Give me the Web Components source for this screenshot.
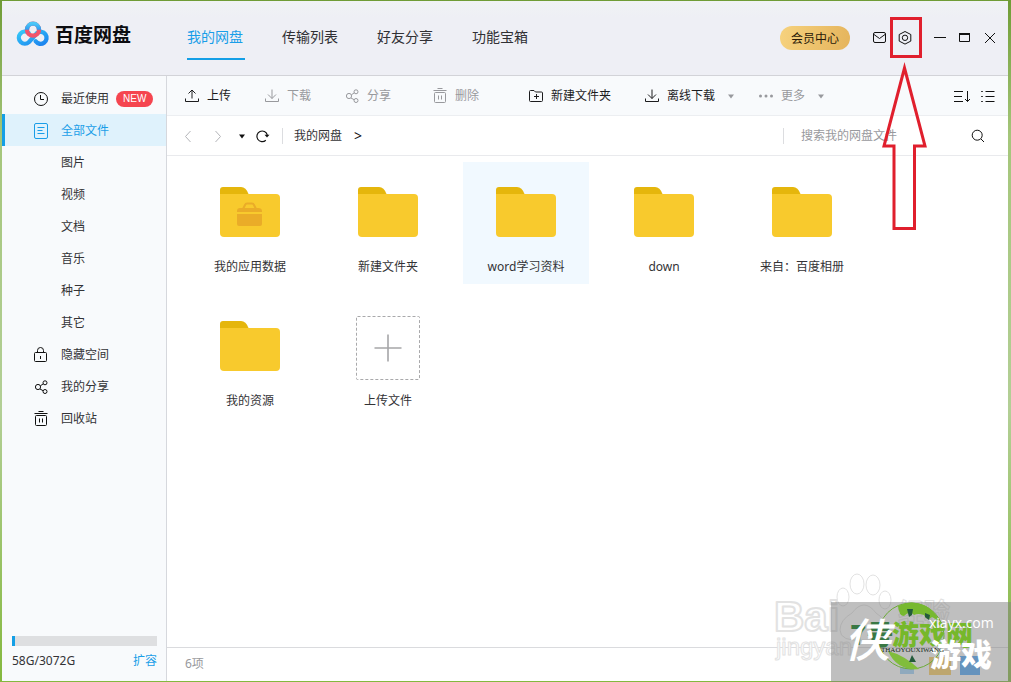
<!DOCTYPE html>
<html lang="zh-CN">
<head>
<meta charset="utf-8">
<meta name="viewport" content="width=device-width, initial-scale=1">
<title>百度网盘</title>
<style>
  body { margin: 0; font: 12px/18px "Noto Sans", "Noto Sans CJK SC", sans-serif; color: #333336; }
</style>
</head>
<body>
<disk-app></disk-app>
<script>
const ICONS = {
  clock: '<circle cx="7" cy="7" r="6.5"/><path d="M6.5 3v4.5H10"/>',
  file: '<rect x=".5" y="-.5" width="13" height="15" rx="1.5"/><path d="M3.5 3.5h7M3.5 6.5h5M3.5 9.5h7"/>',
  lock: '<rect x=".5" y="4.500" width="12" height="9" rx="1"/><path d="M3.500 4.500V2.500a3 3 0 0 1 6 0v2M6.500 8v3"/>',
  share: '<circle cx="4" cy="7" r="2.600"/><circle cx="11" cy="2.800" r="2"/><circle cx="11" cy="11.500" r="2"/><path d="M6.500 5.700l2.700-1.800M6 9l3.300 1.800"/>',
  trash: '<path d="M.5 1.500h13M4.500 -.5h5"/><rect x="1.500" y="3.500" width="11" height="10" rx="1"/><path d="M5.500 6.500v4M8.500 6.500v4"/>',
  upload: '<path d="M.5 9.500v3h13v-3M7 9.500V1M3.500 4.500L7 1l3.500 3.500"/>',
  download: '<path d="M.5 9.500v3h13v-3M7 .5v9M3 5.500l4 4 4-4"/>',
  newfolder: '<path d="M.5 11.500v-9a1 1 0 0 1 1-1h3.500l1.500 1.500h6a1 1 0 0 1 1 1v7.500a1 1 0 0 1-1 1h-11a1 1 0 0 1-1-1zM7.500 5v5M5 7.500h5"/>',
  dots: '<g fill="currentColor" stroke="none"><circle cx="1.500" cy="7" r="1.500"/><circle cx="7" cy="7" r="1.500"/><circle cx="12.500" cy="7" r="1.500"/></g>',
  mail: '<rect x=".5" y="1.500" width="12" height="10" rx="1.500"/><path d="M1 3.500l5.500 4 5.500-4"/>',
  gear: '<path d="M7 .5l5.800 3v6.600L7 13.100l-5.800-3V3.500z"/><circle cx="7" cy="6.800" r="2.700"/>',
  minus: '<path d="M1 6.500h12"/>',
  max: '<path d="M1.500 2.500h10v8h-10z"/><path d="M1 3h11" stroke-width="2"/>',
  close: '<path d="M2 2l10 10M12 2l-10 10"/>',
  sort: '<path d="M-1 2.500h9M-1 7.500h8M-1 12.500h9M12.500 2v10.500M10 10l2.500 2.500L15 10"/>',
  list: '<path d="M.2 2.500h1.600M.2 7.500h1.600M.2 12.500h1.600M4.500 2.500h9M4.500 7.500h9M4.500 12.500h9"/>',
  back: '<path d="M9.500 2l-5 5.500 5 5.500"/>',
  forward: '<path d="M4.500 2l5 5.500-5 5.500"/>',
  reload: '<path d="M9.800 11.200A5.300 5.300 0 1 1 11.300 6" stroke-width="1.200"/><path d="M8.500 5.800h5L11 8.600z" fill="currentColor" stroke="none"/>',
  search: '<circle cx="6.200" cy="6.200" r="5"/><path d="M10 10l3 3"/>',
  caret: '<path d="M4 5.500h6L7 9.500z" fill="currentColor" stroke="none"/>'
};

function define(name, html, ready) {
  const tpl = document.createElement('template');
  tpl.innerHTML = html;
  customElements.define(name, class extends HTMLElement {
    constructor() {
      super();
      this.attachShadow({ mode: 'open' }).append(tpl.content.cloneNode(true));
    }
    connectedCallback() { if (ready) ready(this, this.shadowRoot); }
  });
}

define('disk-icon', `
  <style>
    :host { display: block; width: 14px; height: 14px; flex: none; }
    svg { display: block; width: 100%; height: 100%; overflow: visible; fill: none; stroke: currentColor; }
  </style>
  <svg viewBox="0 0 14 14" aria-hidden="true"></svg>`,
  (el, root) => { root.querySelector('svg').innerHTML = ICONS[el.getAttribute('name')]; });

define('icon-button', `
  <style>
    :host { display: block; flex: none; color: #111; }
    button { display: flex; align-items: center; justify-content: center; width: 100%; height: 24px;
      margin: 0; padding: 0; border: 0; background: none; color: inherit; cursor: pointer; }
  </style>
  <button type="button"><span></span></button>`,
  (el, root) => {
    root.querySelector('span').innerHTML = '<disk-icon name="' + el.getAttribute('icon') + '"></disk-icon>';
    root.querySelector('button').setAttribute('aria-label', el.getAttribute('label'));
  });

define('disk-logo', `
  <style>
    :host { display: flex; align-items: center; gap: 6px; }
    svg { width: 32px; height: 26px; overflow: visible; }
    span { font: 700 19px/26px "Noto Sans CJK SC", sans-serif; color: #0c0c10; }
  </style>
  <svg viewBox="0 0 96 78" fill="none" stroke-width="13" aria-hidden="true">
    <defs>
      <linearGradient id="l" x1="0" y1="0" x2="1" y2="1"><stop offset="0" stop-color="#35c8f8"/><stop offset="1" stop-color="#1b82ee"/></linearGradient>
      <linearGradient id="t" x1="0" y1="0" x2="0" y2="1"><stop offset="0" stop-color="#4cc6f7"/><stop offset="1" stop-color="#2b9cf2"/></linearGradient>
    </defs>
    <path d="M56 61a18 18 0 1 0 4-25L36 63a18 18 0 1 1-1-27" stroke="url(#l)" stroke-linecap="round"/>
    <circle cx="48" cy="26" r="18" stroke="#f2536c"/>
    <path d="M30 26a18 18 0 0 1 36 0" stroke="url(#t)"/>
  </svg>
  <span>百度网盘</span>`);

define('disk-header', `
  <style>
    :host { display: flex; align-items: flex-start; box-sizing: border-box; height: 75px; padding: 0 6px 0 15px;
      background: linear-gradient(#f0f3f4, #eeeff5 16px); border-bottom: 1px solid #d2d3d8; }
    disk-logo { width: 170px; margin-top: 20px; }
    nav { display: flex; gap: 37px; }
    nav a { width: 58px; padding: 25px 0 11px; border-bottom: 2px solid transparent; font-size: 14px; line-height: 21px;
      white-space: nowrap; color: #303034; text-decoration: none; }
    nav a[aria-current] { color: #1a9ee8; border-color: #149fe6; }
    .tools { display: flex; align-items: center; margin: 25px 0 0 auto; }
    .vip { height: 24px; margin: 0 17px 0 0; padding: 1px 11px 0; border: 0; border-radius: 12px; font: inherit;
      color: #2a1a08; background: linear-gradient(100deg, #f6d27e, #e5b45c); }
    icon-button { width: 25px; }
    .rule { width: 1px; height: 14px; margin: 0 5px 0 4px; background: #dcdde3; }
  </style>
  <disk-logo></disk-logo>
  <nav>
    <a href="#disk" aria-current="page">我的网盘</a>
    <a href="#transfer">传输列表</a>
    <a href="#friends">好友分享</a>
    <a href="#tools">功能宝箱</a>
  </nav>
  <div class="tools">
    <button class="vip" type="button">会员中心</button>
    <icon-button icon="mail" label="消息"></icon-button>
    <icon-button icon="gear" label="设置"></icon-button>
    <span class="rule"></span>
    <icon-button icon="minus" label="最小化"></icon-button>
    <icon-button icon="max" label="最大化"></icon-button>
    <icon-button icon="close" label="关闭"></icon-button>
  </div>`);

define('side-item', `
  <style>
    :host { display: block; }
    a { display: flex; align-items: center; box-sizing: border-box; height: 32px; padding: 1px 0 0 29px;
      border-left: 3px solid transparent; color: inherit; text-decoration: none; }
    .slot { width: 14px; margin-right: 13px; color: #111; }
    :host([active]) a, :host([active]) .slot { color: #1a9ee8; }
    :host([active]) a { background: #dff2fc; border-color: #149fe6; }
    ::slotted(b) { margin-left: 7px; padding: 0 7px; border-radius: 8px; background: #f5454f; color: #fff;
      font: 400 10px/16px "Liberation Sans", sans-serif; }
  </style>
  <a href="#list"><span class="slot"></span><slot></slot></a>`,
  (el, root) => {
    const n = el.getAttribute('icon');
    if (n) root.querySelector('.slot').innerHTML = '<disk-icon name="' + n + '"></disk-icon>';
  });

define('disk-sidebar', `
  <style>
    :host { display: flex; flex-direction: column; box-sizing: border-box; width: 165px; flex: none;
      padding-top: 6px; background: #f8fafc; border-right: 1px solid #d6d8dd; }
    .quota { display: flex; flex-wrap: wrap; justify-content: space-between; margin: auto 9px 11px 10px; }
    progress { appearance: none; display: block; width: 100%; height: 10px; margin-bottom: 6px; border: 0; }
    progress::-webkit-progress-bar { background: #dedfe1; }
    progress::-webkit-progress-value { background: #149fe6; }
    .quota a { color: #1a9ee8; text-decoration: none; }
  </style>
  <side-item icon="clock">最近使用<b>NEW</b></side-item>
  <side-item icon="file" active>全部文件</side-item>
  <side-item>图片</side-item>
  <side-item>视频</side-item>
  <side-item>文档</side-item>
  <side-item>音乐</side-item>
  <side-item>种子</side-item>
  <side-item>其它</side-item>
  <side-item icon="lock">隐藏空间</side-item>
  <side-item icon="share">我的分享</side-item>
  <side-item icon="trash">回收站</side-item>
  <div class="quota">
    <progress id="q" max="3072" value="58"></progress>
    <label for="q">58G/3072G</label>
    <a href="#expand">扩容</a>
  </div>`);

define('tool-button', `
  <style>
    :host { display: block; flex: none; color: #1c1c1e; }
    :host([muted]) { color: #98999d; }
    button { display: flex; align-items: center; gap: 8px; margin: 0; padding: 0; border: 0; background: none;
      font: inherit; color: inherit; white-space: nowrap; }
    .caret { width: 14px; margin: 0 -3px 0 1px; color: #98999d; }
    :host(:not([menu])) .caret { display: none; }
  </style>
  <button type="button"><span class="lead"></span><slot></slot><disk-icon class="caret" name="caret"></disk-icon></button>`,
  (el, root) => {
    root.querySelector('.lead').innerHTML = '<disk-icon name="' + el.getAttribute('icon') + '"></disk-icon>';
  });

define('disk-toolbar', `
  <style>
    :host { display: flex; align-items: center; box-sizing: border-box; height: 40px; padding: 0 13px 0 18px;
      background: #f8fafc; border-bottom: 1px solid #eceef1; }
    .group { display: flex; gap: 34px; }
    .group + .group { margin-left: 50px; }
    .group .wide { margin-left: 8px; }
    .group.more { margin-left: 24px; }
    .views { display: flex; gap: 12px; margin-left: auto; }
    icon-button { width: 14px; }
  </style>
  <div class="group">
    <tool-button icon="upload">上传</tool-button>
    <tool-button icon="download" muted>下载</tool-button>
    <tool-button icon="share" muted>分享</tool-button>
    <tool-button class="wide" icon="trash" muted>删除</tool-button>
  </div>
  <div class="group">
    <tool-button icon="newfolder">新建文件夹</tool-button>
    <tool-button icon="download" menu>离线下载</tool-button>
  </div>
  <div class="group more">
    <tool-button icon="dots" muted menu>更多</tool-button>
  </div>
  <div class="views">
    <icon-button icon="sort" label="排序"></icon-button>
    <icon-button icon="list" label="列表视图"></icon-button>
  </div>`);

define('disk-address', `
  <style>
    :host { display: flex; align-items: center; box-sizing: border-box; height: 40px; padding: 0 23px 0 11px;
      background: #fff; border-bottom: 1px solid #e9eaed; }
    .nav { display: flex; align-items: center; gap: 10px; }
    .nav icon-button { width: 20px; }
    .nav .dim { color: #b4b5b9; }
    .nav .small { width: 8px; }
    .nav .mid { width: 14px; }
    .rule { width: 1px; height: 16px; margin: 0 11px 0 12px; background: #dcdde0; }
    .path { display: flex; gap: 12px; }
    .path a { color: inherit; text-decoration: none; }
    .path span { font-size: 14px; color: #111; }
    form { display: flex; align-items: center; margin-left: auto; width: 202px; }
    .rule.edge { margin: 0 17px 0 0; }
    input { flex: 1; min-width: 0; height: 24px; padding: 0; border: 0; outline: 0; background: none; font: inherit; color: inherit; }
    input::placeholder { color: #98999d; }
    form icon-button { width: 14px; }
  </style>
  <div class="nav">
    <icon-button class="dim" icon="back" label="后退"></icon-button>
    <icon-button class="dim" icon="forward" label="前进"></icon-button>
    <icon-button class="small" icon="caret" label="历史"></icon-button>
    <icon-button class="mid" icon="reload" label="刷新"></icon-button>
  </div>
  <span class="rule"></span>
  <div class="path"><a href="#root">我的网盘</a><span>&gt;</span></div>
  <form>
    <span class="rule edge"></span>
    <input type="search" aria-label="搜索" placeholder="搜索我的网盘文件">
    <icon-button icon="search" label="搜索"></icon-button>
  </form>`);

define('file-tile', `
  <style>
    :host { display: flex; flex-direction: column; align-items: center; box-sizing: border-box; height: 122px;
      padding-top: 20px; text-align: center; }
    :host([selected]) { background: #f1f9ff; }
    svg { width: 64px; height: 64px; margin-bottom: 12px; }
    .app, .add { display: none; }
    :host([kind=app]) .app, :host([kind=add]) .add { display: inline; }
    :host([kind=add]) .folder { display: none; }
  </style>
  <svg viewBox="0 0 64 64" aria-hidden="true">
    <g class="folder">
      <path d="M2 20V8a3 3 0 0 1 3-3h18q5 0 7.500 7v8z" fill="#e5b60c"/>
      <path d="M2 12h56a4 4 0 0 1 4 4v35a4 4 0 0 1-4 4H6a4 4 0 0 1-4-4z" fill="#f8ca2d"/>
    </g>
    <g class="app" fill="#eaac28">
      <path d="M19 30v-1q0-3 3-3h18q4 0 4 3v1zM19 32h25v10q0 2-2 2H21q-2 0-2-2z"/>
      <path d="M25 27l2-4q.5-1.500 2-1.500h5q1.500 0 2 1.500l2 4" fill="none" stroke="#eaac28" stroke-width="2"/>
    </g>
    <g class="add" fill="none">
      <rect x=".5" y=".5" width="63" height="63" rx="1" stroke="#a9a9ab" stroke-dasharray="3 2"/>
      <path d="M18.500 32h27M32 18.500v27" stroke="#a6a6a8" stroke-width="1.600"/>
    </g>
  </svg>
  <slot></slot>`);

define('disk-files', `
  <style>
    :host { display: grid; grid-template-columns: repeat(auto-fill, 126px); gap: 12px; align-content: start;
      flex: 1; padding: 6px 20px; background: #fff; }
  </style>
  <file-tile kind="app">我的应用数据</file-tile>
  <file-tile>新建文件夹</file-tile>
  <file-tile selected>word学习资料</file-tile>
  <file-tile>down</file-tile>
  <file-tile>来自：百度相册</file-tile>
  <file-tile>我的资源</file-tile>
  <file-tile kind="add">上传文件</file-tile>`);

define('disk-marks', `
  <style>
    :host { position: absolute; inset: 0; pointer-events: none; }
    svg { position: absolute; right: 0; }
    .arrow { top: 0; }
    .stamp { bottom: 0; }
    text { font-family: "Noto Sans CJK SC", sans-serif; }
  </style>
  <svg class="arrow" width="131" height="240" viewBox="880 0 131 240" fill="none" stroke="#e01f2d" stroke-width="3" aria-hidden="true">
    <path d="M891.500 18.500h29v38h-29z"/>
    <path d="M904.500 68l20.500 78h-10.500v82.500h-20.500V146H884z"/>
  </svg>
  <svg class="stamp" width="241" height="122" viewBox="770 560 241 122">
    <g fill="#fff" stroke="#e2e2e2" stroke-width="2" stroke-linejoin="round">
      <text x="774" y="631" font-size="42" font-weight="700" style="font-family:'Liberation Sans',sans-serif">Bai</text>
      <text x="776" y="655" font-size="24" stroke-width="1" style="font-family:'Liberation Sans',sans-serif">jingyan</text>
      <path d="M840 630q0-10 12-17 6-8 12-8t12 8q12 8 12 17 0 12-24 10-24 2-24-10z" stroke-width="1"/>
      <g stroke-width="1">
        <ellipse cx="857" cy="584" rx="7" ry="10"/><ellipse cx="873" cy="585" rx="7" ry="10"/>
        <ellipse cx="843" cy="597" rx="6" ry="9"/><ellipse cx="885" cy="600" rx="6" ry="9"/>
        <text x="898" y="622" font-size="26" font-weight="700">经验</text>
      </g>
    </g>
    <path d="M831 602h180v80H831z" fill="#808080" fill-opacity=".5"/>
    <path d="M900 667h14v7h-14z" fill="#8fa9bd"/>
    <path d="M929 657h22v18h-22z" fill="#bda66f"/>
    <path d="M960 656h20v19h-20z" fill="#6593bd"/>
    <circle cx="911" cy="636" r="33" fill="none" stroke="#6dac38"/>
    <path d="M898 606q14-7 28 0 11 7 13 15l-7-4q-5 5-8-2-6-2-10 0-4-5-10 1-5 0-6-10z" fill="#77b92f"/>
    <path d="M907 609h6l-1 6-3 2zM925 613l5 2-1 5-4-3z" fill="#245b3c"/>
    <path d="M888 651q16 4 31 18-22 2-31-18z" fill="#80bd3c"/>
    <path d="M909 662l3-7 4 7z" fill="#245b3c"/>
    <g font-weight="900">
      <text x="850" y="645" font-size="27" fill="#397844">7号</text>
      <text x="892" y="645" font-size="27" fill="#76b82b">游戏网</text>
    </g>
    <text x="844" y="657" font-size="46" font-weight="500" font-style="italic" fill="#fff">侠</text>
    <text x="930" y="666" font-size="31" font-weight="900" fill="#fff">游戏</text>
    <text x="929" y="628" font-size="14" fill="#fff" style="font-family:'Open Sans',sans-serif">xiayx.com</text>
    <text x="881" y="652" font-size="7" fill="#162819" style="font-family:'Liberation Serif',serif">THAOYOUXIWANG</text>
  </svg>`);

define('disk-app', `
  <style>
    :host { display: flex; flex-direction: column; position: relative; box-sizing: border-box; min-height: 100vh;
      padding: 1px 3px 1px 2px;
      background: linear-gradient(#6f9c35, #a5c67b 20%, #b3cf96 60%, #84b83e); }
    .body { display: flex; flex: 1; }
    main { display: flex; flex-direction: column; flex: 1; min-width: 0; }
    footer { box-sizing: border-box; height: 34px; padding: 7px 18px; background: #fff; border-top: 1px solid #dadbde; color: #98999d; }
  </style>
  <disk-header></disk-header>
  <div class="body">
    <disk-sidebar></disk-sidebar>
    <main>
      <disk-toolbar></disk-toolbar>
      <disk-address></disk-address>
      <disk-files></disk-files>
      <footer>6项</footer>
    </main>
  </div>
  <disk-marks></disk-marks>`);
</script>
</body>
</html>
